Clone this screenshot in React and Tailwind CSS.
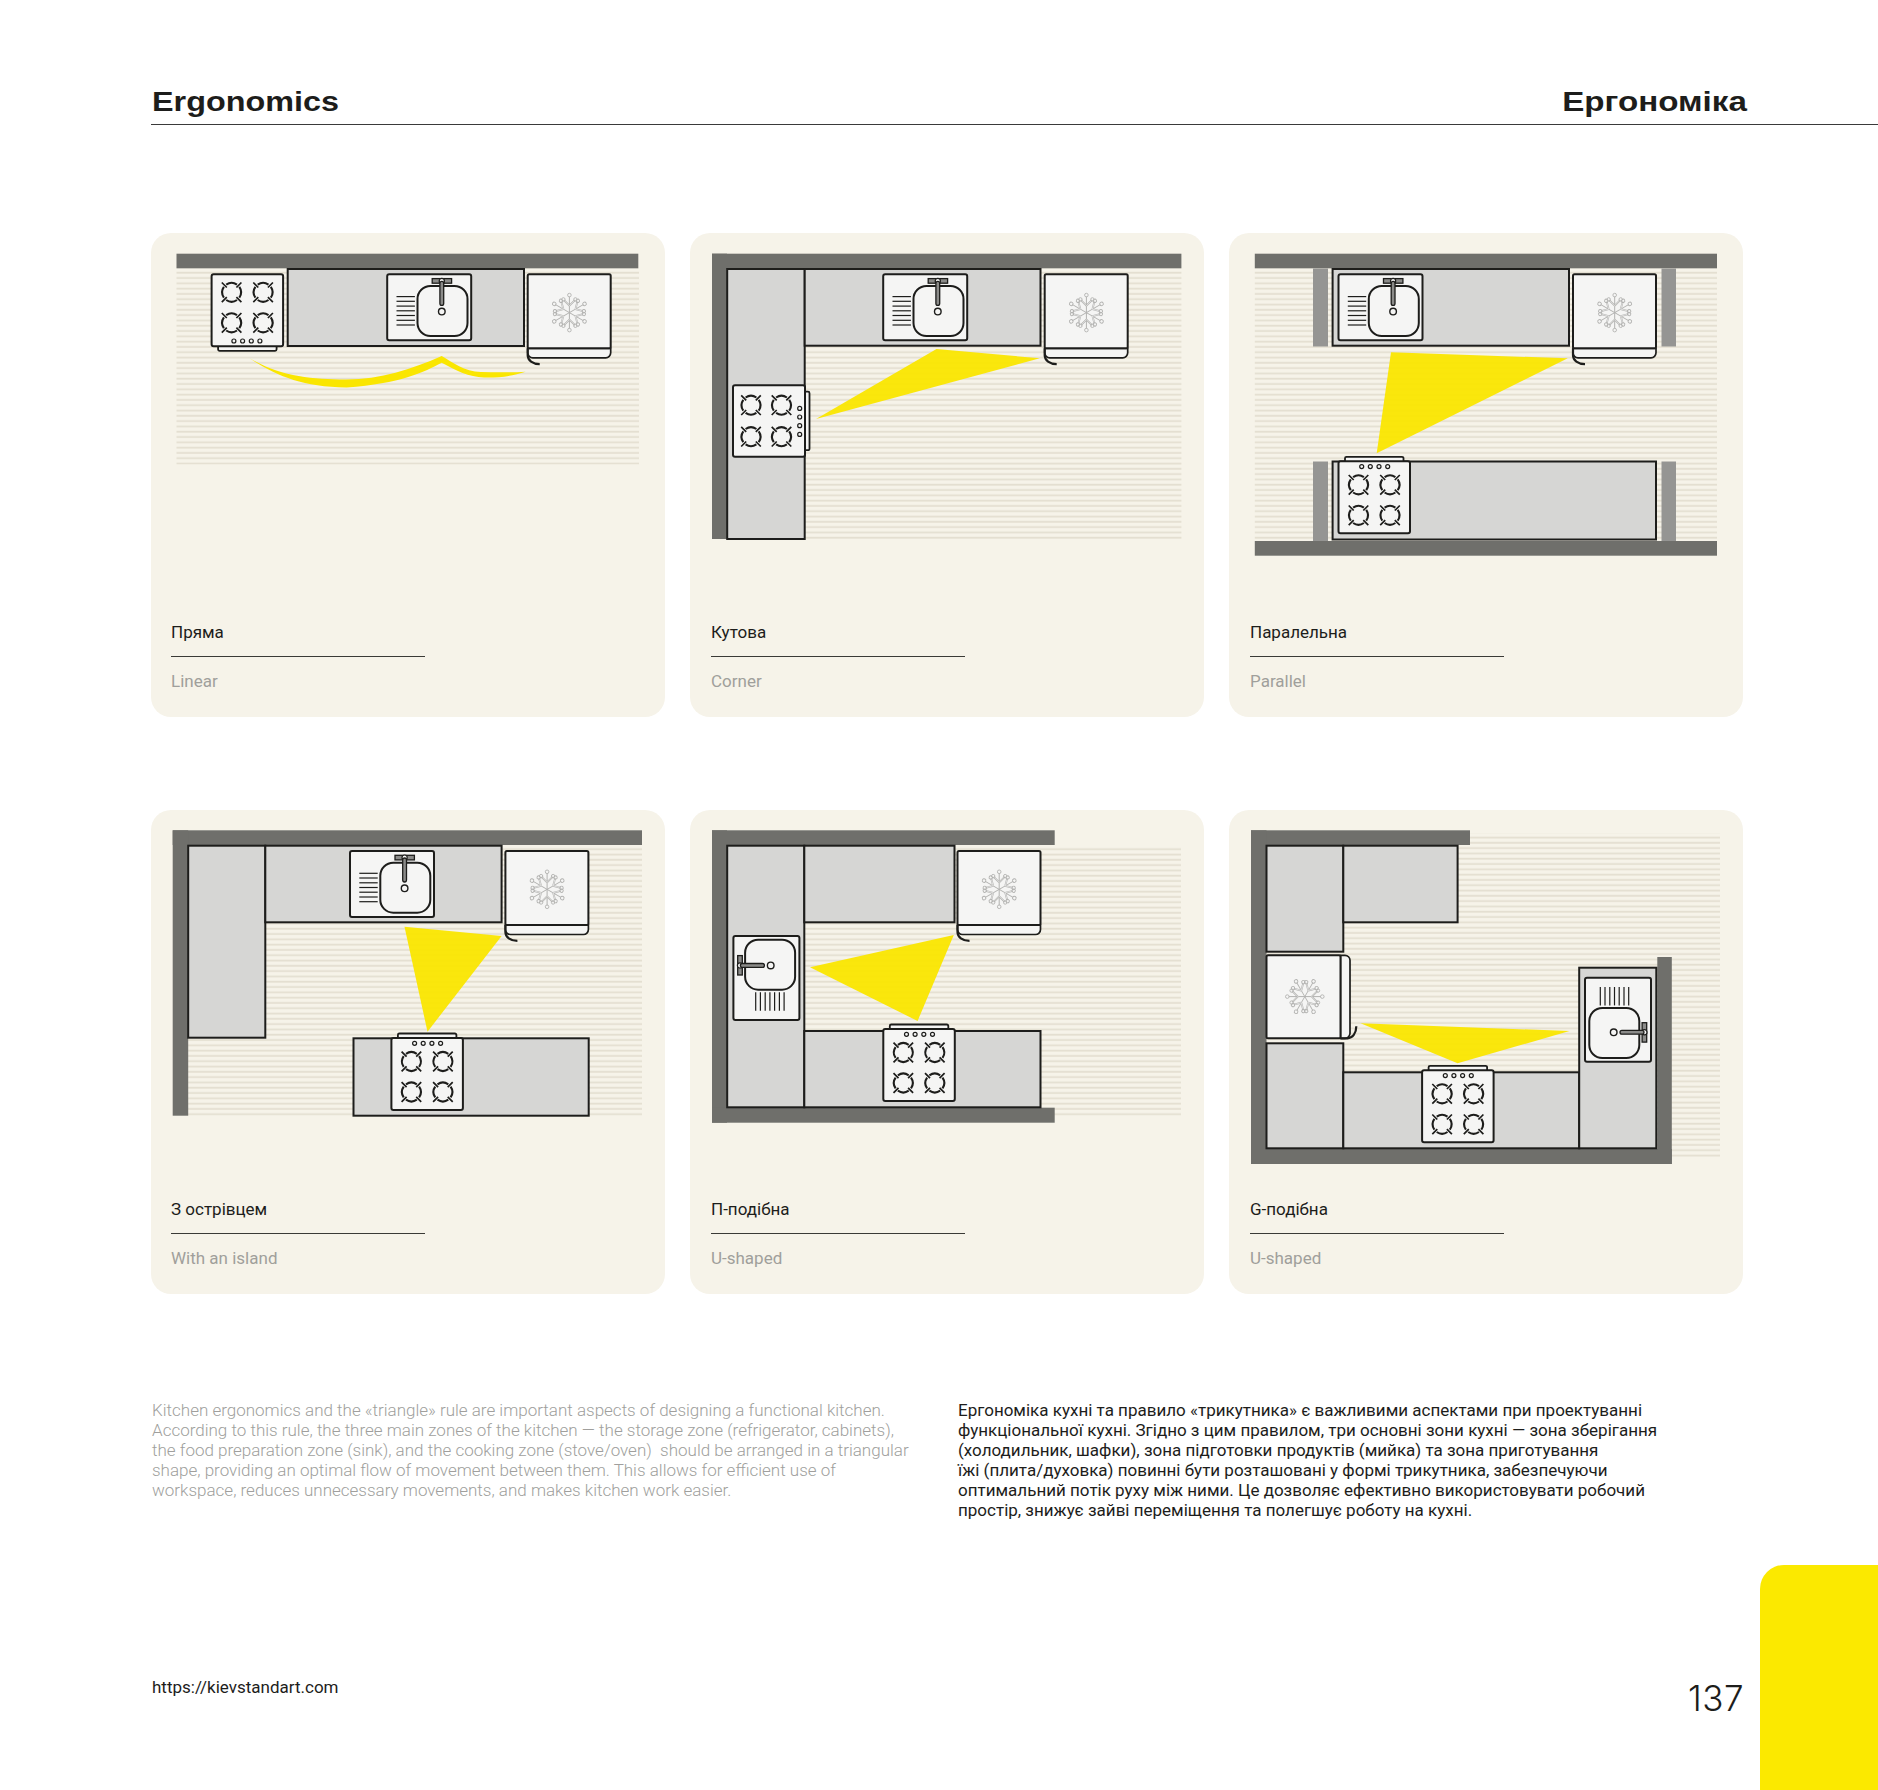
import React from 'react';

const INK = '#1d1d1b';
const WALL = '#6f6f6b';
const PILLAR = '#959593';
const COUNTER = '#d6d6d4';
const APPLIANCE = '#f5f5f4';
const YELLOW = '#fae600';

function polar(r, deg) {
    const rad = (deg * Math.PI) / 180;
    return `${(r * Math.cos(rad)).toFixed(2)} ${(r * Math.sin(rad)).toFixed(2)}`;
}

function Burner({ cx, cy }) {
    // four arcs with small crossing supports on the diagonals
    const r = 9.4;
    const gap = 10;
    const arcs = [45, 135, 225, 315].map((deg) => `M${polar(r, deg + gap)}A${r} ${r} 0 0 1 ${polar(r, deg + 90 - gap)}`);
    const a = 4.8;
    const b = 9.8;
    return (
        <g transform={`translate(${cx} ${cy})`} fill="none" stroke={INK}>
            {arcs.map((p, i) => <path key={i} d={p} strokeWidth="2.1" />)}
            <path d={`M${-a} ${-a}L${-b} ${-b}M${a} ${-a}L${b} ${-b}M${-a} ${a}L${-b} ${b}M${a} ${a}L${b} ${b}`} strokeWidth="1.7" />
        </g>
    );
}

function Stove({ transform }) {
    return (
        <g transform={transform}>
            <rect x="6.5" y="70" width="58.5" height="6.5" rx="1.5" fill={APPLIANCE} stroke={INK} strokeWidth="1.8" />
            <rect x="0" y="0" width="71.5" height="72" rx="2" fill={APPLIANCE} stroke={INK} strokeWidth="2" />
            <Burner cx={20} cy={18} />
            <Burner cx={51.5} cy={18} />
            <Burner cx={20} cy={48.5} />
            <Burner cx={51.5} cy={48.5} />
            {[22.3, 31, 39.7, 48.3].map((x) => (
                <circle key={x} cx={x} cy="66.7" r="2" fill="none" stroke={INK} strokeWidth="1.2" />
            ))}
        </g>
    );
}

function Sink({ transform }) {
    return (
        <g transform={transform}>
            <rect x="0" y="0" width="84" height="66" rx="2" fill={APPLIANCE} stroke={INK} strokeWidth="2" />
            {[22.3, 27, 31.8, 36.5, 41.2, 46, 50.7].map((y) => (
                <line key={y} x1="9.3" x2="27.7" y1={y} y2={y} stroke={INK} strokeWidth="1.2" />
            ))}
            <rect x="30.3" y="11.7" width="50" height="50" rx="13" fill={APPLIANCE} stroke={INK} strokeWidth="2" />
            <rect x="45" y="4.3" width="19.4" height="4.6" fill="#8b8b89" stroke={INK} strokeWidth="1.3" />
            <circle cx="54.6" cy="6.6" r="2.6" fill={APPLIANCE} stroke={INK} strokeWidth="1.2" />
            <rect x="52.7" y="7" width="3.8" height="24" rx="1.9" fill="#8b8b89" stroke={INK} strokeWidth="1.3" />
            <circle cx="54.6" cy="37.3" r="3.3" fill={APPLIANCE} stroke={INK} strokeWidth="1.4" />
        </g>
    );
}

function Snowflake({ cx, cy }) {
    return (
        <g transform={`translate(${cx} ${cy})`} fill="none" stroke="#b2b2b0" strokeWidth="0.9">
            {[0, 60, 120, 180, 240, 300].map((deg) => (
                <g key={deg} transform={`rotate(${deg})`}>
                    <line x1="0" y1="0" x2="0" y2="-16" strokeWidth={deg % 180 === 0 ? 1 : 0.9} />
                    <path d="M0 -7L-5.5 -12.5M0 -7L5.5 -12.5" strokeWidth="1.8" />
                    <path d="M0 -7L-5.5 -12.5M0 -7L5.5 -12.5" stroke={APPLIANCE} strokeWidth="0.6" />
                    <circle cx="-6" cy="-13.2" r="1.7" />
                    <circle cx="6" cy="-13.2" r="1.7" />
                    <circle cx="0" cy="-17.5" r="1.8" />
                </g>
            ))}
        </g>
    );
}

function Fridge({ transform }) {
    return (
        <g transform={transform}>
            <path d="M0 74H83V78.5A5 5 0 0 1 78 83.5H5A5 5 0 0 1 0 78.5Z" fill={APPLIANCE} stroke={INK} strokeWidth="1.7" />
            <rect x="0" y="0" width="83" height="74" rx="1.5" fill={APPLIANCE} stroke={INK} strokeWidth="2" />
            <Snowflake cx={41.7} cy={38.3} />
            <path d="M0 74V81C0 86 5 89.8 12 89.8" fill="none" stroke={INK} strokeWidth="2.2" />
        </g>
    );
}

// a grey block of kitchen units with a black outline
function Unit({ x1, y1, x2, y2 }) {
    return <rect x={x1} y={y1} width={x2 - x1} height={y2 - y1} fill={COUNTER} stroke={INK} strokeWidth="2" />;
}

function Wall({ x1, y1, x2, y2, color = WALL }) {
    return <rect x={x1} y={y1} width={x2 - x1} height={y2 - y1} fill={color} />;
}

function Floor({ id, x1, y1, x2, y2 }) {
    return (
        <>
            <defs>
                <pattern id={id} x="0" y={y1} width="8" height="5.3" patternUnits="userSpaceOnUse">
                    <rect x="0" y="3.3" width="8" height="1.8" fill="#e4dfd1" />
                </pattern>
            </defs>
            <rect x={x1} y={y1} width={x2 - x1} height={y2 - y1} fill={`url(#${id})`} />
        </>
    );
}

function Triangle({ points }) {
    return <polygon points={points} fill={YELLOW} fillOpacity="0.95" />;
}

function Plan({ top = false, children }) {
    // the first row sits half a pixel lower in the drawing than the card grid allows
    return (
        <svg className="block w-[514px] h-[380px] shrink-0" viewBox={top ? '0 -0.5 514 380' : '0 0 514 380'}>
            {children}
        </svg>
    );
}

function LinearPlan() {
    return (
        <Plan top>
            <Floor id="floor1" x1={25.5} y1={35} x2={488} y2={231} />
            <Wall x1={25.5} y1={20.2} x2={487.3} y2={34.8} />
            <Unit x1={136.7} y1={35.5} x2={373} y2={112.5} />
            <Stove transform="translate(60.6 40.8)" />
            <Sink transform="translate(236.2 40.8)" />
            <Fridge transform="translate(376.7 40.8)" />
            <path
                d="M98.5 124.8C130 143 160 146 195 146C230 146 260 136 290.7 122.5C302 129 313 138 330 138.5C345 139 360 139 374.7 138.2C360 143 345 144.5 333 144C318 143.5 305 137 290.7 129.2C272 139 250 150 195.6 154C150 153 125 142 98.5 124.8Z"
                fill={YELLOW}
            />
        </Plan>
    );
}

function CornerPlan() {
    return (
        <Plan top>
            <Floor id="floor2" x1={37} y1={35} x2={491.4} y2={306.5} />
            <Wall x1={22} y1={20.2} x2={491.4} y2={34.8} />
            <Wall x1={22} y1={20.2} x2={37} y2={305.5} />
            <Unit x1={37.2} y1={35.5} x2={114.7} y2={305.5} />
            <Unit x1={114.7} y1={35.5} x2={350.5} y2={112.2} />
            <Sink transform="translate(193.2 40.8)" />
            <Fridge transform="translate(354.7 40.8)" />
            <Stove transform="translate(43 223.2) rotate(-90)" />
            <Triangle points="246.5,115.5 349.9,124.8 126,185.5" />
        </Plan>
    );
}

function ParallelPlan() {
    return (
        <Plan top>
            <Floor id="floor3" x1={25.8} y1={35} x2={488} y2={307} />
            <Wall x1={25.8} y1={20.2} x2={488} y2={34.8} />
            <Wall x1={25.8} y1={307.5} x2={488} y2={322.2} />
            <Wall x1={84} y1={35} x2={99} y2={113} color={PILLAR} />
            <Wall x1={432.5} y1={35} x2={447} y2={113} color={PILLAR} />
            <Wall x1={84} y1={228} x2={99} y2={307.5} color={PILLAR} />
            <Wall x1={432.5} y1={228} x2={447} y2={307.5} color={PILLAR} />
            <Unit x1={103.6} y1={35.5} x2={340} y2={112.2} />
            <Unit x1={103.6} y1={228} x2={427} y2={306} />
            <Sink transform="translate(109.5 40.8)" />
            <Fridge transform="translate(344 40.8)" />
            <Stove transform="translate(181 299.8) rotate(180)" />
            <Triangle points="162,118.8 338.8,124.8 147.7,219.8" />
        </Plan>
    );
}

function IslandPlan() {
    return (
        <Plan>
            <Floor id="floor4" x1={37} y1={35} x2={491} y2={306} />
            <Wall x1={21.7} y1={20.3} x2={491} y2={35} />
            <Wall x1={21.7} y1={20.3} x2={37.2} y2={305.7} />
            <Unit x1={37.2} y1={35.7} x2={114.3} y2={227.7} />
            <Unit x1={114.3} y1={35.7} x2={350.6} y2={112.3} />
            <Unit x1={202.5} y1={228.3} x2={437.7} y2={305.7} />
            <Sink transform="translate(199 41)" />
            <Fridge transform="translate(354.4 41)" />
            <Stove transform="translate(311.9 300) rotate(180)" />
            <Triangle points="253.5,116.7 350.6,126 276.5,221.7" />
        </Plan>
    );
}

function UShapedPlan() {
    return (
        <Plan>
            <Floor id="floor5" x1={114} y1={35} x2={491} y2={306.7} />
            <Wall x1={22} y1={20.3} x2={364.7} y2={35} />
            <Wall x1={22} y1={20.3} x2={37} y2={312.7} />
            <Wall x1={22} y1={297.7} x2={364.7} y2={312.7} />
            <Unit x1={37.2} y1={35.7} x2={114.3} y2={297.3} />
            <Unit x1={114.3} y1={35.7} x2={264.5} y2={112.3} />
            <Unit x1={114.3} y1={221} x2={350.5} y2={297.3} />
            <Fridge transform="translate(267.5 41)" />
            <Stove transform="translate(264.8 291) rotate(180)" />
            <Sink transform="translate(43.4 210) rotate(-90)" />
            <Triangle points="263.8,125 120,157.3 227.6,211" />
        </Plan>
    );
}

function GShapedPlan() {
    return (
        <Plan>
            <Floor id="floor6" x1={37} y1={23.3} x2={491} y2={347.7} />
            <Wall x1={22} y1={20.3} x2={241} y2={35} />
            <Wall x1={22} y1={20.3} x2={37.5} y2={354} />
            <Wall x1={22} y1={339} x2={442.8} y2={354} />
            <Wall x1={428.3} y1={147} x2={442.8} y2={354} />
            <Unit x1={37.5} y1={35.7} x2={114.3} y2={141.7} />
            <Unit x1={114.3} y1={35.7} x2={228.6} y2={112.3} />
            <Unit x1={37.5} y1={233.3} x2={114.3} y2={338.3} />
            <Unit x1={114.3} y1={262.3} x2={350.2} y2={338.3} />
            <Unit x1={350.2} y1={157.7} x2={427.3} y2={338.3} />
            <Fridge transform="translate(37.5 228.3) rotate(-90)" />
            <Stove transform="translate(264.6 332.3) rotate(180)" />
            <Sink transform="translate(422 167.7) rotate(90)" />
            <Triangle points="131.5,213.3 340.5,221 228.6,253.3" />
        </Plan>
    );
}

const layouts = [
    { ua: 'Пряма', en: 'Linear', pad: 'pl-5', Drawing: LinearPlan },
    { ua: 'Кутова', en: 'Corner', pad: 'pl-[21px]', Drawing: CornerPlan },
    { ua: 'Паралельна', en: 'Parallel', pad: 'pl-[21px]', Drawing: ParallelPlan },
    { ua: 'З острівцем', en: 'With an island', pad: 'pl-5', Drawing: IslandPlan },
    { ua: 'П-подібна', en: 'U-shaped', pad: 'pl-[21px]', Drawing: UShapedPlan },
    { ua: 'G-подібна', en: 'U-shaped', pad: 'pl-[21px]', Drawing: GShapedPlan },
];

const enLines = [
    'Kitchen ergonomics and the «triangle» rule are important aspects of designing a functional kitchen.',
    'According to this rule, the three main zones of the kitchen — the storage zone (refrigerator, cabinets),',
    'the food preparation zone (sink), and the cooking zone (stove/oven)  should be arranged in a triangular',
    'shape, providing an optimal flow of movement between them. This allows for efficient use of',
    'workspace, reduces unnecessary movements, and makes kitchen work easier.',
];

const uaLines = [
    'Ергономіка кухні та правило «трикутника» є важливими аспектами при проектуванні',
    'функціональної кухні. Згідно з цим правилом, три основні зони кухні — зона зберігання',
    '(холодильник, шафки), зона підготовки продуктів (мийка) та зона приготування',
    'їжі (плита/духовка) повинні бути розташовані у формі трикутника, забезпечуючи',
    'оптимальний потік руху між ними. Це дозволяє ефективно використовувати робочий',
    'простір, знижує зайві переміщення та полегшує роботу на кухні.',
];

function Card({ ua, en, pad, Drawing }) {
    return (
        <div className="h-[484px] rounded-[20px] bg-[#f6f3e9] flex flex-col">
            <Drawing />
            <div className={`${pad} pt-[3px]`}>
                <div className="h-[41px] w-[254px] pt-[4px] border-b border-[#3a3a36] text-[17px] leading-[24px] text-[#1d1d1b] whitespace-nowrap">{ua}</div>
                <div className="mt-[12px] text-[17px] leading-[24px] text-[#a09f9b] whitespace-nowrap">{en}</div>
            </div>
        </div>
    );
}

export default function App() {
    return (
        <div className="w-[1878px] h-[1790px] bg-white overflow-hidden flex flex-col font-['Roboto',sans-serif]">
            <header className="h-[125px] ml-[151px] border-b border-[#3a3a3a] flex items-end justify-between pb-[4px] text-[#1d1d1b] font-['Liberation_Sans',sans-serif] font-bold text-[28px] leading-[36px] pl-[1px]">
                <span className="inline-block origin-left scale-x-[1.155] whitespace-nowrap">Ergonomics</span>
                <span className="inline-block origin-right scale-x-[1.185] whitespace-nowrap mr-[131px]">Ергономіка</span>
            </header>

            <main className="mt-[108px] ml-[151px] w-[1592px] grid grid-cols-3 gap-x-[25px] gap-y-[93px]">
                {layouts.map((l) => (
                    <Card key={l.ua} ua={l.ua} en={l.en} pad={l.pad} Drawing={l.Drawing} />
                ))}
            </main>

            <section className="mt-[106px] ml-[152px] flex text-[17px] leading-[20.1px]">
                <div className="w-[806px] text-[#a09f9d] font-light whitespace-pre">
                    {enLines.map((line) => <div key={line}>{line}</div>)}
                </div>
                <div className="text-[#1d1d1b] whitespace-pre">
                    {uaLines.map((line) => <div key={line}>{line}</div>)}
                </div>
            </section>

            <footer className="flex-1 flex items-end justify-between pl-[152px]">
                <div className="self-end mb-[91px] text-[17px] leading-[24px] text-[#1d1d1b]">https://kievstandart.com</div>
                <div className="flex items-end">
                    <div className="mb-[72px] mr-[16px] font-['Inter',sans-serif] font-light text-[35px] leading-[40px] tracking-[0.5px] text-[#1d1d1b]">137</div>
                    <div className="w-[118px] h-[225px] rounded-tl-[24px] bg-[#fbe900]"></div>
                </div>
            </footer>
        </div>
    );
}
